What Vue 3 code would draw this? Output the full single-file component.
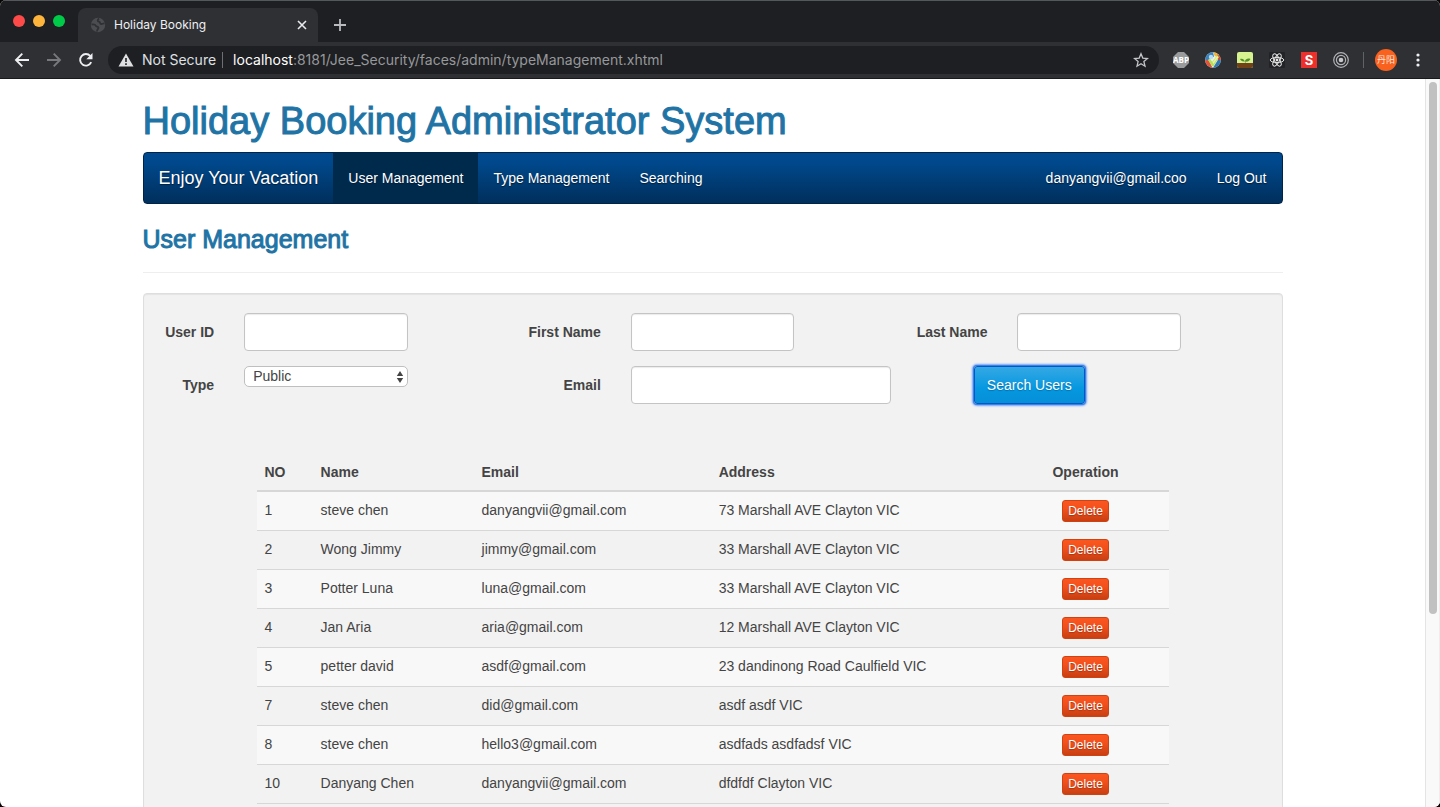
<script setup>
import { ref } from 'vue'

const navLinks = [
  { label: 'User Management', active: true },
  { label: 'Type Management', active: false },
  { label: 'Searching', active: false }
]

const type = ref('Public')

const users = ref([
  { no: 1, name: 'steve chen', email: 'danyangvii@gmail.com', address: '73 Marshall AVE Clayton VIC' },
  { no: 2, name: 'Wong Jimmy', email: 'jimmy@gmail.com', address: '33 Marshall AVE Clayton VIC' },
  { no: 3, name: 'Potter Luna', email: 'luna@gmail.com', address: '33 Marshall AVE Clayton VIC' },
  { no: 4, name: 'Jan Aria', email: 'aria@gmail.com', address: '12 Marshall AVE Clayton VIC' },
  { no: 5, name: 'petter david', email: 'asdf@gmail.com', address: '23 dandinong Road Caulfield VIC' },
  { no: 7, name: 'steve chen', email: 'did@gmail.com', address: 'asdf asdf VIC' },
  { no: 8, name: 'steve chen', email: 'hello3@gmail.com', address: 'asdfads asdfadsf VIC' },
  { no: 10, name: 'Danyang Chen', email: 'danyangvii@gmail.com', address: 'dfdfdf Clayton VIC' }
])
</script>

<template>
  <div class="window">
    <header class="chrome">
      <div class="tabstrip">
        <div class="lights">
          <span class="light red"></span>
          <span class="light yellow"></span>
          <span class="light green"></span>
        </div>
        <div class="tab">
          <svg class="favicon" viewBox="0 0 16 16" width="16" height="16">
            <circle cx="8" cy="8" r="7.200" fill="#4b4d50" />
            <path d="M1.500 7.500c2.500-.5 4 .3 4.500 1.500.5 1 2.500.3 2.500 1.800 0 1.200-1.500 1.200-1.500 3.700M9 1.500C7 3 7.500 4.500 9 4.700c1.500.2.500 2 2 2.300 1.500.2 2-.8 3.500-.5" fill="none" stroke="#2e3034" stroke-width="1.800" />
          </svg>
          <span class="tab-title">Holiday Booking</span>
          <button class="icon-btn close" aria-label="Close tab">
            <svg viewBox="0 0 10 10" width="10" height="10"><path d="M1 1l8 8M9 1L1 9" stroke="#e8eaed" stroke-width="1.600" /></svg>
          </button>
        </div>
        <button class="icon-btn new-tab" aria-label="New tab">
          <svg viewBox="0 0 12 12" width="12" height="12"><path d="M6 0v12M0 6h12" stroke="#b9bbbf" stroke-width="1.800" /></svg>
        </button>
      </div>

      <div class="toolbar">
        <button class="icon-btn tool" aria-label="Back">
          <svg viewBox="0 0 16 16" width="16" height="16"><path d="M15 8H2.500M8.300 1.700L2 8l6.300 6.300" fill="none" stroke="#eeeff1" stroke-width="1.900" /></svg>
        </button>
        <button class="icon-btn tool" aria-label="Forward">
          <svg viewBox="0 0 16 16" width="16" height="16"><path d="M1 8h12.500M7.700 1.700L14 8l-6.300 6.300" fill="none" stroke="#77797c" stroke-width="1.900" /></svg>
        </button>
        <button class="icon-btn tool" aria-label="Reload">
          <svg viewBox="0 0 16 16" width="16" height="16">
            <path d="M13.200 10.200A5.800 5.800 0 1 1 12.300 4" fill="none" stroke="#eeeff1" stroke-width="1.900" />
            <path d="M14.500 1v6.200H8.300z" fill="#eeeff1" />
          </svg>
        </button>
        <div class="omnibox">
          <svg viewBox="0 0 16 14" width="16" height="14"><path d="M8 .5L15.500 13.500H.5z" fill="#dfe0e2" /><path d="M8 5v4M8 10.300v1.700" stroke="#1f2023" stroke-width="1.600" /></svg>
          <span class="insecure">Not Secure</span>
          <span class="omni-sep"></span>
          <span class="url"><b>localhost</b>:8181/Jee_Security/faces/admin/typeManagement.xhtml</span>
          <button class="icon-btn star" aria-label="Bookmark">
            <svg viewBox="0 0 16 16" width="16" height="16"><path d="M8 1.800l1.800 4.300 4.700.4-3.600 3.100 1.100 4.600L8 11.700l-4 2.500 1.100-4.600L1.500 6.500l4.700-.4z" fill="none" stroke="#c3c5c8" stroke-width="1.300" /></svg>
          </button>
        </div>
        <button class="icon-btn tool" aria-label="Ad blocker">
          <svg viewBox="0 0 16 16" width="16" height="16">
            <path d="M5 0h6l5 5v6l-5 5H5l-5-5V5z" fill="#9a9b9c" />
            <text x="8" y="11" text-anchor="middle" class="abp">ABP</text>
          </svg>
        </button>
        <button class="icon-btn tool" aria-label="Checker extension">
          <svg viewBox="0 0 16 16" width="16" height="16">
            <circle cx="8" cy="8" r="7.800" fill="#e8efe0" />
            <path d="M8 .2A7.800 7.800 0 0 0 .2 8l2 .5L9 4.500z" fill="#3b83c0" />
            <circle cx="6" cy="5" r="2.200" fill="#b7dbf2" />
            <path d="M9 .3a7.800 7.800 0 0 1 5 3L11.500 5 9 3z" fill="#efb63e" />
            <path d="M12.500 2a7.800 7.800 0 0 1 3.300 6L13 9z" fill="#cf4638" />
            <path d="M.2 8a7.800 7.800 0 0 0 7.300 7.800L3.500 8z" fill="#e0533c" />
            <path d="M15.800 8A7.800 7.800 0 0 1 8 15.800l5-8z" fill="#3178b3" />
            <path d="M3 8l2.200-1 2 3L12 3.500l2 1.500-5.500 9H7z" fill="#b4e05a" />
            <path d="M7.500 10.500L12 4l1.500 1-5 7z" fill="#eef29a" />
          </svg>
        </button>
        <button class="icon-btn tool" aria-label="Forest extension">
          <svg viewBox="0 0 16 16" width="16" height="16">
            <rect width="16" height="16" rx="2" fill="#d7f391" />
            <path d="M0 11h16v3a2 2 0 0 1-2 2H2a2 2 0 0 1-2-2z" fill="#714117" />
            <path d="M8 11c0-3-2-5-5-4 1 2 3 3 5 2 .5-2 3-3 5.500-2-1 2-3 3-5 2.500V11z" fill="#54912b" />
          </svg>
        </button>
        <button class="icon-btn tool" aria-label="React tools">
          <svg viewBox="0 0 16 16" width="16" height="16">
            <rect width="16" height="16" rx="1" fill="#222326" />
            <g fill="none" stroke="#e6e6e6" stroke-width="1">
              <ellipse cx="8" cy="8" rx="6.800" ry="2.600" />
              <ellipse cx="8" cy="8" rx="6.800" ry="2.600" transform="rotate(60 8 8)" />
              <ellipse cx="8" cy="8" rx="6.800" ry="2.600" transform="rotate(120 8 8)" />
            </g>
            <circle cx="8" cy="8" r="1.400" fill="#e6e6e6" />
          </svg>
        </button>
        <button class="icon-btn tool" aria-label="S extension"><span class="s-badge">S</span></button>
        <button class="icon-btn tool" aria-label="Target extension">
          <svg viewBox="0 0 16 16" width="16" height="16">
            <g fill="none" stroke="#b2b3b5" stroke-width="1.200"><circle cx="8" cy="8" r="7.300" /><circle cx="8" cy="8" r="4.600" /></g>
            <circle cx="8" cy="8" r="2.300" fill="#c6c7c9" />
          </svg>
        </button>
        <span class="bar-sep"></span>
        <button class="icon-btn avatar" aria-label="Profile">丹阳</button>
        <button class="icon-btn menu" aria-label="Menu">
          <svg viewBox="0 0 4 14" width="4" height="14" fill="#eeeff1"><circle cx="2" cy="2" r="1.600" /><circle cx="2" cy="7" r="1.600" /><circle cx="2" cy="12" r="1.600" /></svg>
        </button>
      </div>
    </header>

    <div class="viewport">
      <main class="page">
        <div class="container">
          <h1>Holiday Booking Administrator System</h1>
          <nav class="navbar">
            <a class="brand" href="#">Enjoy Your Vacation</a>
            <a v-for="l in navLinks" :key="l.label" href="#" class="nav-link" :class="{ active: l.active }">{{ l.label }}</a>
            <span class="spacer"></span>
            <a class="nav-link" href="#">danyangvii@gmail.coo</a>
            <a class="nav-link" href="#">Log Out</a>
          </nav>
          <h2>User Management</h2>
          <hr />
          <section class="well">
            <form class="search" @submit.prevent>
              <label for="uid" class="l1">User ID</label>
              <input id="uid" class="f1" type="text" />
              <label for="first" class="l2">First Name</label>
              <input id="first" class="f2" type="text" />
              <label for="last" class="l3">Last Name</label>
              <input id="last" class="f3" type="text" />
              <label for="type" class="l1">Type</label>
              <div class="select f1">
                <select id="type" v-model="type">
                  <option>Public</option>
                  <option>Admin</option>
                </select>
                <svg viewBox="0 0 8 12" width="8" height="12" fill="#444"><path d="M4 0l3.200 5H.8zM4 12L.8 7h6.400z" /></svg>
              </div>
              <label for="email" class="l2">Email</label>
              <input id="email" class="wide" type="text" />
              <button type="submit" class="submit">Search Users</button>
            </form>
            <div class="table-wrap">
              <table>
                <colgroup>
                  <col class="c-no" /><col class="c-name" /><col class="c-email" /><col class="c-address" /><col class="c-op" />
                </colgroup>
                <thead>
                  <tr><th>NO</th><th>Name</th><th>Email</th><th>Address</th><th class="center">Operation</th></tr>
                </thead>
                <tbody>
                  <tr v-for="u in users" :key="u.no">
                    <td>{{ u.no }}</td>
                    <td>{{ u.name }}</td>
                    <td>{{ u.email }}</td>
                    <td>{{ u.address }}</td>
                    <td class="center"><button type="button" class="delete">Delete</button></td>
                  </tr>
                </tbody>
              </table>
            </div>
          </section>
        </div>
      </main>
      <div class="scrollbar"><div class="thumb"></div></div>
    </div>
  </div>
</template>

<style>
body {
  margin: 0;
  background: #050505;
}
</style>

<style scoped>
* {
  box-sizing: border-box;
}
.window {
  display: flex;
  flex-direction: column;
  height: 100vh;
  overflow: hidden;
  border-radius: 6px;
  background: #fff;
  color: #444;
  font: 14px/20px "Liberation Sans", Arial, sans-serif;
}
button {
  font: inherit;
  cursor: pointer;
}
.icon-btn {
  display: flex;
  align-items: center;
  justify-content: center;
  padding: 0;
  border: 0;
  background: none;
}
.chrome {
  flex: none;
  background: #1e1f22;
  color: #eeeff1;
  font-family: Inter, Roboto, sans-serif;
  box-shadow: inset 0 1px #55585a;
}
.tabstrip {
  display: flex;
  align-items: flex-end;
  height: 42px;
}
.lights {
  display: flex;
  gap: 8px;
  width: 78px;
  height: 42px;
  padding: 15px 0 0 13px;
}
.light {
  width: 12px;
  height: 12px;
  border-radius: 50%;
}
.red { background: #ff4a4a; }
.yellow { background: #ffb53c; }
.green { background: #00cb49; }
.tab {
  display: flex;
  align-items: center;
  width: 240px;
  height: 34px;
  padding: 0 10px 0 12px;
  border-radius: 8px 8px 0 0;
  background: #2e3034;
}
.tab-title {
  flex: 1;
  margin-left: 8px;
  font-size: 12px;
}
.close {
  width: 12px;
  height: 16px;
}
.new-tab {
  width: 28px;
  height: 34px;
  margin-left: 8px;
}
.toolbar {
  display: flex;
  align-items: center;
  height: 37px;
  padding: 0 8px 1px 6px;
  background: #2e3034;
  border-bottom: 1px solid #191a1c;
}
.tool {
  flex: none;
  width: 32px;
  height: 28px;
}
.omnibox {
  display: flex;
  flex: 1;
  align-items: center;
  height: 28px;
  margin: 0 6px;
  padding: 0 10px;
  border-radius: 14px;
  background: #1e1f22;
}
.insecure {
  margin-left: 8px;
  color: #dfe0e2;
}
.omni-sep {
  width: 1px;
  height: 16px;
  margin: 0 10px 0 6px;
  background: #6d6f72;
}
.url {
  flex: 1;
  color: #96989b;
}
.url b {
  color: #fff;
  font-weight: 400;
}
.abp {
  fill: #fff;
  font: bold 8px "Open Sans", "Liberation Sans", sans-serif;
}
.s-badge {
  width: 16px;
  height: 16px;
  background: #ee302c;
  color: #fff;
  font: bold 13px/16px Inter, sans-serif;
}
.bar-sep {
  width: 1px;
  height: 16px;
  margin: 0 11px 0 6px;
  background: #606265;
}
.avatar {
  width: 22px;
  height: 22px;
  border-radius: 50%;
  background: #f8611e;
  color: #fbe6dc;
  font: 9px/22px "Noto Sans CJK SC", sans-serif;
}
.menu {
  width: 28px;
  height: 28px;
  margin-left: 7px;
}
.viewport {
  display: flex;
  flex: 1;
  min-height: 0;
}
.page {
  flex: 1;
  min-width: 0;
  overflow: hidden;
}
.container {
  max-width: 1170px;
  margin: 0 auto;
  padding: 0 15px;
}
.scrollbar {
  flex: none;
  width: 15px;
  padding: 3px 3px 0;
  border-left: 1px solid #e4e4e4;
  border-right: 1px solid #ededed;
  background: #f9f9f9;
}
.thumb {
  width: 8px;
  height: 73.4%;
  border-radius: 4px;
  background: #c1c1c1;
}
h1,
h2 {
  margin: 0;
  color: #1f74a5;
  font-weight: 400;
  -webkit-text-stroke: 1px #1f74a5;
}
h1 {
  padding: 22px 0 11px;
  font-size: 38px;
  line-height: 40px;
}
h2 {
  padding-top: 22px;
  font-size: 25px;
  line-height: 26px;
}
.navbar {
  display: flex;
  height: 52px;
  border: 1px solid #002446;
  border-radius: 4px;
  background: linear-gradient(#004990, #00488b 20%, #002f5c);
}
.navbar a {
  padding: 15px;
  color: #fff;
  text-decoration: none;
  text-shadow: 0 1px 1px #001f3d;
}
.navbar .brand {
  font-size: 18px;
}
.navbar .active {
  background: #002a4c;
}
.spacer {
  flex: 1;
}
hr {
  height: 1px;
  margin: 20px 0;
  border: 0;
  background: #eee;
}
.well {
  padding: 19px 5px;
  border: 1px solid #dedede;
  border-radius: 4px;
  background: #f2f2f2;
  box-shadow: inset 0 1px 1px #e4e4e4;
}
.search {
  display: grid;
  grid-template-columns: repeat(12, 1fr);
  gap: 15px 0;
  margin: 0 -16px;
}
.search label {
  padding: 9px 15px;
  text-align: right;
  font-weight: 700;
  white-space: nowrap;
}
.l1 { grid-column: 1; }
.f1 { grid-column: 2 / 4; }
.l2 { grid-column: 4 / 6; }
.f2 { grid-column: 6 / 8; }
.l3 { grid-column: 8 / 10; }
.f3 { grid-column: 10 / 12; }
.wide { grid-column: 6 / 9; }
.search input {
  min-width: 0;
  height: 38px;
  margin: 0 15px;
  padding: 8px 12px;
  border: 1px solid #c4c4c4;
  border-radius: 4px;
  background: #fff;
  box-shadow: inset 0 1px 1px #ececec;
  font: inherit;
}
.select {
  position: relative;
  height: 21px;
  margin: 0 15px;
}
.select select {
  display: block;
  width: 100%;
  height: 21px;
  padding: 0 8px;
  border: 1px solid #bfbfbf;
  border-radius: 5px;
  background: #fff;
  color: #444;
  font: inherit;
  line-height: 19px;
  appearance: none;
}
.select svg {
  position: absolute;
  top: 5px;
  right: 4px;
  pointer-events: none;
}
.submit {
  grid-column: 9 / 12;
  justify-self: start;
  height: 38px;
  margin-left: 68px;
  padding: 0 12px;
  border: 1px solid #0059c8;
  border-radius: 3px;
  background: linear-gradient(#35a8e4, #0598e0 60%, #068fd8);
  box-shadow: 0 0 0 1px #3f7fe6, 0 0 2px 2px #6fa2f5;
  color: #fff;
  text-shadow: 0 1px 1px #0670ac;
}
.table-wrap {
  padding: 50px 108px 0;
}
table {
  width: 100%;
  table-layout: fixed;
  border-spacing: 0;
}
.c-no { width: 6.15%; }
.c-name { width: 17.65%; }
.c-email { width: 26%; }
.c-address { width: 32%; }
.c-op { width: 18.2%; }
th,
td {
  padding: 8px;
  text-align: left;
  vertical-align: top;
}
th {
  border-bottom: 2px solid #d7d7d7;
}
td {
  border-bottom: 1px solid #d7d7d7;
}
tbody tr:nth-child(odd) {
  background: #f8f8f8;
}
.center {
  text-align: center;
}
.delete {
  display: block;
  height: 22px;
  margin: 0 auto;
  padding: 0 5px;
  border: 1px solid #cf4313;
  border-radius: 3px;
  background: linear-gradient(#fb5620, #f2501c 40%, #c83f12);
  color: #fff;
  font-size: 12px;
  line-height: 20px;
  text-shadow: 0 1px 1px #a83510;
}
</style>
